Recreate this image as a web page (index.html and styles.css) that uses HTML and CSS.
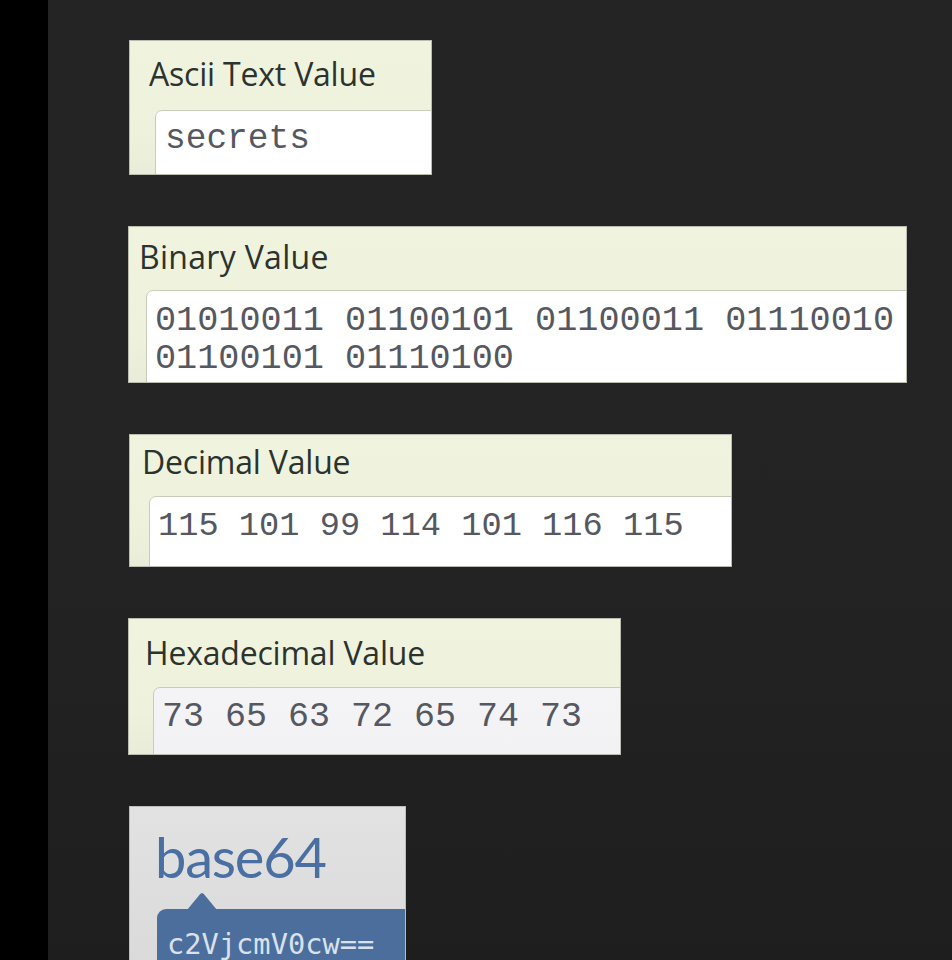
FILE: index.html
```html
<!DOCTYPE html>
<html>
<head>
<meta charset="utf-8">
<link rel="stylesheet" href="styles.css">
</head>
<body>
<div class="screen">
  <div class="strip"></div>
  <main class="column">
    <section class="panel p-ascii">
      <div class="label">Ascii Text Value</div>
      <div class="field"><div class="mono">secrets</div></div>
    </section>
    <section class="panel p-binary">
      <div class="label">Binary Value</div>
      <div class="field"><div class="mono">01010011 01100101 01100011 01110010</div><div class="mono">01100101 01110100</div></div>
    </section>
    <section class="panel p-decimal">
      <div class="label">Decimal Value</div>
      <div class="field"><div class="mono">115 101 99 114 101 116 115</div></div>
    </section>
    <section class="panel p-hex">
      <div class="label">Hexadecimal Value</div>
      <div class="field"><div class="mono">73 65 63 72 65 74 73</div></div>
    </section>
    <section class="b64">
      <div class="b64-title">base64</div>
      <div class="b64-box"><div class="b64-text">c2VjcmV0cw==</div></div>
    </section>
  </main>
</div>
</body>
</html>
```

FILE: styles.css
```css
html, body {
  margin: 0;
  padding: 0;
  background: #232323;
  overflow: hidden;
}

.screen {
  display: flex;
  width: 952px;
  height: 960px;
  background: linear-gradient(to bottom, #242424 0%, #232323 60%, #1e1e1e 100%);
}

.strip {
  width: 48px;
  flex: none;
  background: #000;
}

.column {
  display: flex;
  flex-direction: column;
  align-items: flex-start;
  gap: 51px;
  padding-top: 40px;
  padding-left: 81px;
}

.panel {
  box-sizing: border-box;
  overflow: hidden;
  background: linear-gradient(to bottom, #f0f4df 0%, #eef2dc 70%, #e9ecd9 100%);
  border: 1px solid #b9bcae;
  flex: none;
}

.label {
  font-family: "Open Sans", "Liberation Sans", sans-serif;
  font-size: 32px;
  line-height: 40px;
  color: #2c332f;
  white-space: nowrap;
  letter-spacing: -0.2px;
}

.field {
  box-sizing: border-box;
  background: #ffffff;
  border: 1px solid #c9ccbb;
  border-top-left-radius: 7px;
  width: 1200px;
  height: 200px;
  padding-left: 8px;
}

.mono {
  font-family: "Liberation Mono", "Courier New", monospace;
  font-size: 34px;
  line-height: 38px;
  color: #555860;
  white-space: pre;
}

/* Ascii */
.p-ascii {
  width: 303px;
  height: 135px;
  padding: 13px 0 0 19px;
}
.p-ascii .field {
  margin-top: 16px;
  margin-left: 6px;
  padding-top: 9px;
  padding-left: 9px;
}
.p-ascii .mono { font-size: 34.5px; }

/* Binary */
.p-binary {
  width: 779px;
  height: 157px;
  margin-left: -1px;
  padding: 10px 0 0 10px;
}
.p-binary .label { letter-spacing: 0.3px; }
.p-binary .field {
  margin-top: 13px;
  margin-left: 7px;
  padding-top: 11px;
  padding-left: 8px;
}
.p-binary .mono { font-size: 35.2px; }

/* Decimal */
.p-decimal {
  width: 603px;
  height: 133px;
  padding: 7px 0 0 12px;
}
.p-decimal .field {
  margin-top: 14px;
  margin-left: 7px;
  padding-top: 10px;
  padding-left: 8px;
}
.p-decimal .mono { font-size: 33.7px; }

/* Hex */
.p-hex {
  width: 493px;
  height: 137px;
  margin-left: -1px;
  padding: 14px 0 0 16px;
}
.p-hex .field {
  margin-top: 14px;
  margin-left: 8px;
  padding-top: 10px;
  padding-left: 8px;
  background: linear-gradient(to bottom, #f4f4f6 0%, #efeff2 100%);
}
.p-hex .mono { font-size: 35px; }

/* base64 */
.b64 {
  box-sizing: border-box;
  width: 277px;
  height: 200px;
  overflow: hidden;
  flex: none;
  background: linear-gradient(to bottom, #e2e2e2 0%, #d8d8d8 100%);
  border: 1px solid #bdbdbd;
  padding: 16px 0 0 25px;
}

.b64-title {
  font-family: Lato, "Open Sans", sans-serif;
  font-size: 56px;
  line-height: 67px;
  color: #4a6fa3;
  letter-spacing: -1.2px;
}

.b64-box {
  position: relative;
  box-sizing: border-box;
  margin-top: 19px;
  margin-left: 2px;
  width: 400px;
  height: 120px;
  background: #4c6e9d;
  border-top-left-radius: 9px;
  padding: 18px 0 0 10px;
}

.b64-box::before {
  content: "";
  position: absolute;
  left: 30px;
  top: -16px;
  width: 30px;
  height: 17px;
  background: #4c6e9d;
  clip-path: polygon(0 100%, 44% 6%, 50% 0, 56% 6%, 100% 100%);
}

.b64-text {
  font-family: "DejaVu Sans Mono", monospace;
  font-size: 28.7px;
  line-height: 34px;
  color: #d9e1ec;
  white-space: pre;
}
```
